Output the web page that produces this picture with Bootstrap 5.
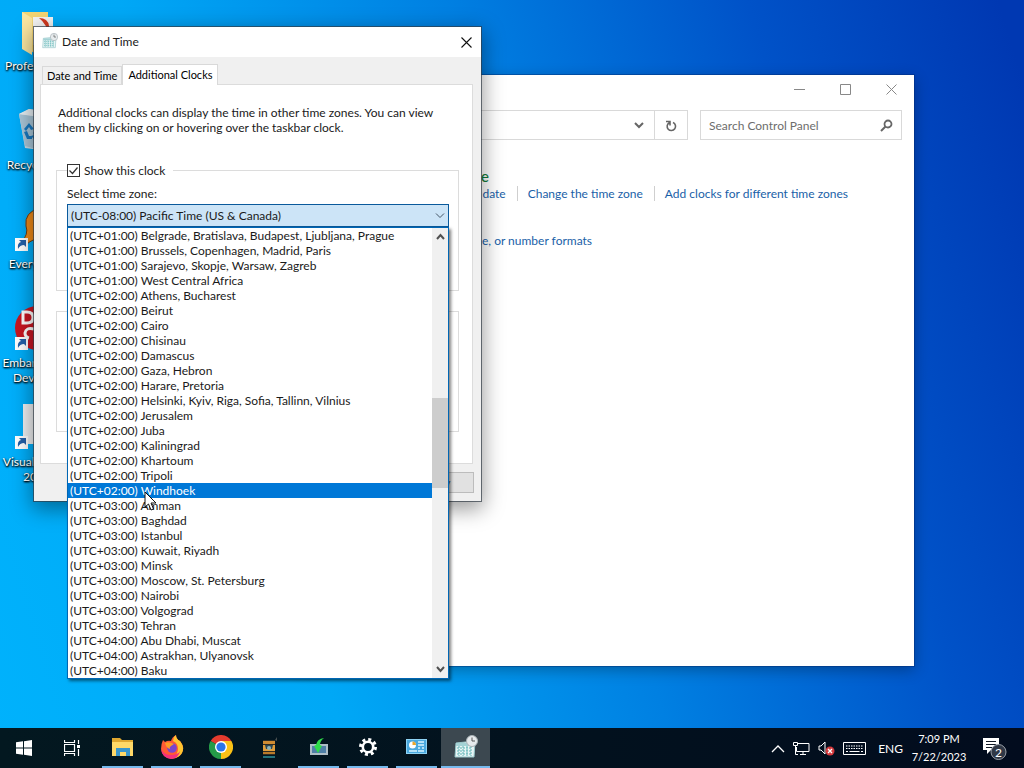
<!DOCTYPE html>
<html lang="en">

<head>
    <meta charset="UTF-8">
    <meta name="viewport" content="width=device-width, initial-scale=1.0">
    <title>Date and Time</title>
    <link href="https://cdn.jsdelivr.net/npm/bootstrap@5.3.0/dist/css/bootstrap.min.css" rel="stylesheet">
    <style>
        body {
            font-family: Lato, "Open Sans", sans-serif;
            font-size: 12px;
            line-height: 15px;
            color: #1a1a1a;
        }

        .desktop {
            min-height: 100vh;
            background: linear-gradient(73deg, #00b2fc 0%, #00a8f6 28%, #0080e2 54%, #0052c8 78%, #0038b2 98%);
        }

        .workspace {
            flex: 1 1 auto;
        }

        /* desktop shortcuts */
        .shortcuts {
            width: 74px;
            padding-top: 8px;
        }

        .shortcut {
            height: 99px;
            color: #fff;
            text-shadow: 0 1px 2px #000, 1px 1px 2px #000;
        }

        .shortcut svg {
            width: 48px;
            height: 48px;
            margin-bottom: 2px;
        }

        .win {
            position: absolute;
            background: #fff;
        }

        /* control panel window */
        .panel-win {
            left: 300px;
            top: 75px;
            width: 614px;
            height: 591px;
            box-shadow: 0 0 0 1px rgba(0, 40, 110, .4), 0 4px 14px rgba(0, 0, 0, .3);
        }

        .panel-win .titlebar {
            height: 27px;
        }

        .caption-btn {
            width: 46px;
            height: 27px;
            padding: 0;
            border: 0;
            background: none;
        }

        .address,
        .search-box {
            height: 30px;
            border: 1px solid #d9d9d9;
        }

        .search-box {
            width: 202px;
        }

        .search-box input {
            border: 0;
            outline: 0;
            min-width: 0;
            font-size: 12px;
            padding: 0 0 0 8px;
        }

        .search-box input::placeholder {
            color: #6d6d6d;
            opacity: 1;
        }

        .refresh {
            width: 33px;
            border: 0;
            border-left: 1px solid #d9d9d9;
            background: none;
            padding: 0;
        }

        .panel-body {
            padding: 26px 66px 0 0;
        }

        .panel-body a {
            color: #1a5fa8;
            text-decoration: none;
        }

        .panel-body h2 {
            font-size: 15px;
            line-height: 20px;
            margin: 0;
        }

        .panel-body h2 a {
            color: #107c3a;
        }

        .divided {
            border-left: 1px solid #cfcfcf;
            padding-left: 10px;
            margin-left: 11px;
        }

        /* dialog */
        .dialog-win {
            left: 34px;
            top: 27px;
            width: 447px;
            height: 474px;
            background: #f0f0f0;
            box-shadow: 0 0 0 1px rgba(50, 60, 70, .7), 0 6px 20px 2px rgba(0, 0, 0, .4);
        }

        .dialog-win .titlebar {
            height: 30px;
            background: #fff;
            padding: 0 0 2px 8px;
        }

        .dialog-win .caption-btn {
            width: 30px;
        }

        .tabs {
            padding: 7px 7px 0 8px;
            font-size: 11px;
        }

        .tab-btn {
            border: 1px solid #d9d9d9;
            border-bottom: 0;
            background: #f0f0f0;
            padding: 0 4px;
            height: 18px;
        }

        .tab-btn.chosen {
            background: #fff;
            height: 21px;
            padding: 0 5px 2px;
            margin-bottom: -1px;
            z-index: 1;
        }

        .tab-page {
            margin: 0 8px 0 6px;
            height: 380px;
            background: #fff;
            border: 1px solid #dcdcdc;
            padding: 20px 13px 0 15px;
        }

        .tab-page p {
            margin: 0 0 35px 2px;
        }

        .clock-group {
            border: 1px solid #dcdcdc;
            height: 121px;
            margin-bottom: 20px;
            padding: 0 9px 0 10px;
        }

        .clock-group label {
            width: fit-content;
        }

        .tick-line {
            margin-top: -8px;
            background: #fff;
            padding-right: 8px;
            width: fit-content;
        }

        .tick {
            appearance: none;
            width: 13px;
            height: 13px;
            margin: 0;
            border: 1px solid #333;
            background: #fff url("data:image/svg+xml,%3Csvg xmlns='http://www.w3.org/2000/svg' viewBox='0 0 11 11'%3E%3Cpath d='M1.5 5.5l3 3 5-6' fill='none' stroke='%23333' stroke-width='1.2'/%3E%3C/svg%3E");
        }

        .zone-select {
            position: relative;
            margin-top: 3px;
        }

        .zone-select select {
            appearance: none;
            width: 100%;
            height: 23px;
            border: 1px solid #0a5a9c;
            background: #cce4f7;
            padding: 0 3px;
            border-radius: 0;
            color: #1a1a1a;
            display: block;
        }

        .zone-select > svg {
            position: absolute;
            right: 4px;
            top: 8px;
        }

        .zone-popup {
            position: absolute;
            left: 0;
            right: 0;
            top: 23px;
            z-index: 5;
            background: #fff;
            border: 1px solid #0066b4;
            box-shadow: 2px 2px 3px rgba(0, 0, 0, .5);
        }

        .zone-popup li {
            height: 15px;
            padding-left: 2px;
            white-space: nowrap;
        }

        .zone-popup li[aria-selected="true"] {
            background: #0078d7;
            color: #fff;
        }

        .scroller {
            width: 16px;
            background: #f0f0f0;
        }

        .scroller .thumb {
            height: 90px;
            background: #cdcdcd;
        }

        .above {
            flex: 153 0 0;
        }

        .below {
            flex: 174 0 0;
        }

        .dialog-foot {
            padding: 8px 7px;
        }

        .dialog-foot button {
            width: 75px;
            height: 21px;
            padding: 0;
            border: 1px solid #bcbcbc;
            background: #e1e1e1;
            color: #555;
            font-size: 11px;
        }

        .pointer {
            position: absolute;
            left: 144px;
            top: 491px;
            z-index: 9;
        }

        /* taskbar */
        .taskbar {
            height: 40px;
            background: linear-gradient(90deg, #031820, #02121e 50%, #020c1e);
            color: #fff;
            position: relative;
            z-index: 10;
        }

        .task {
            width: 49px;
            height: 40px;
            padding: 0 4px;
            border: 0;
            background: none;
        }

        .system .task {
            width: 48px;
        }

        .system {
            margin-right: 2px;
        }

        .task span {
            width: 100%;
            height: 40px;
            border-bottom: 2px solid transparent;
        }

        .task.running span {
            border-color: #76b9ed;
        }

        .task.current {
            padding: 0;
            background: #3c4850;
        }

        .tray button {
            border: 0;
            background: none;
            padding: 0;
            color: #fff;
        }

        .clock {
            font-size: 11px;
            line-height: 18px;
            width: 56px;
        }
    </style>
</head>

<body>
    <div class="desktop d-flex flex-column position-relative overflow-hidden">
        <main class="workspace">
            <div class="shortcuts d-flex flex-column">
                <div class="shortcut d-flex flex-column align-items-center text-center">
                    <svg viewBox="0 0 48 48">
                        <path d="M9 4h26v38l-9 5-17-8z" fill="#f3d574" />
                        <path d="M9 4l10 6v37l-10-6z" fill="#fbe6a0" />
                        <path d="M20 9h20v28H20z" fill="#f4f4f4" />
                        <path d="M26 10q9 0 10 8v10q-2-12-10-18" fill="#d43a20" />
                    </svg>
                    Professional
                </div>
                <div class="shortcut d-flex flex-column align-items-center text-center">
                    <svg viewBox="0 0 48 48">
                        <path d="M6 7l10-5 24 4-5 38-23-3z" fill="#cbdde8" />
                        <path d="M6 7l28 4-3 33-19-5z" fill="#a9c6d8" />
                        <path d="M6 7l10-5 24 4-6 5z" fill="#e6eff4" />
                        <path d="M11 22l5-6 5 6-3 1-2-3-3 4zM11 25l3 7h5v-3h-3l-2-5zM21 32l4-6-3-3-2 3 1 2-3 1z" fill="#1879c0" />
                    </svg>
                    Recycle Bin
                </div>
                <div class="shortcut d-flex flex-column align-items-center text-center">
                    <svg viewBox="0 0 48 48">
                        <path d="M27 2q-16 4-14 18 3 8-5 17l4 3q8-9 17-6 14 0 15-15Q43 2 27 2" fill="#f08a18" stroke="#6b3c10" />
                        <rect x="2" y="32" width="13" height="13" fill="#fff" />
                        <path d="M5 43q-1-6 3-7l-2-2h7v7l-2-2q-4 0-6 4" fill="#2360a8" />
                    </svg>
                    Everything
                </div>
                <div class="shortcut d-flex flex-column align-items-center text-center">
                    <svg viewBox="0 0 48 48">
                        <circle cx="24" cy="23" r="22" fill="#c91622" />
                        <path d="M10 7h4q6 0 6 5.500t-6 5.500h-4zM21 24q-8-2-9 4 0 4 4 5" fill="none" stroke="#fff" stroke-width="3" />
                        <rect x="2" y="32" width="13" height="13" fill="#fff" />
                        <path d="M5 43q-1-6 3-7l-2-2h7v7l-2-2q-4 0-6 4" fill="#2360a8" />
                    </svg>
                    Embarcadero<br>Dev-C++
                </div>
                <div class="shortcut d-flex flex-column align-items-center text-center">
                    <svg viewBox="0 0 48 48">
                        <path d="M10 0h30v40H10z" fill="#eef0f2" />
                        <rect x="2" y="32" width="13" height="13" fill="#fff" />
                        <path d="M5 43q-1-6 3-7l-2-2h7v7l-2-2q-4 0-6 4" fill="#2360a8" />
                    </svg>
                    Visual Studio<br>2022
                </div>
            </div>

            <section class="win panel-win">
                <div class="titlebar d-flex justify-content-end">
                    <button class="caption-btn" aria-label="Minimize"><svg width="11" height="11"><path d="M0 5.500h11" stroke="#888" /></svg></button>
                    <button class="caption-btn" aria-label="Maximize"><svg width="11" height="11"><path d="M.5.500h10v10H.5z" fill="none" stroke="#888" /></svg></button>
                    <button class="caption-btn" aria-label="Close"><svg width="11" height="11"><path d="M.5.500l10 10M10.500.500l-10 10" stroke="#888" /></svg></button>
                </div>
                <div class="d-flex mt-1 pt-1 px-2 gap-2">
                    <div class="address d-flex flex-fill justify-content-end align-items-center">
                        <svg class="me-2" width="16" height="12"><path d="M5 4l4 4 4-4" fill="none" stroke="#666" stroke-width="2" /></svg>
                        <button class="refresh h-100" aria-label="Refresh">
                            <svg width="12" height="12"><path d="M8 2.500A4.200 4.200 0 1 1 4.300 2.700M1 1.500h4v4" fill="none" stroke="#666" stroke-width="1.600" /></svg>
                        </button>
                    </div>
                    <div class="search-box d-flex align-items-center ms-1 me-1 pe-2">
                        <input class="flex-fill" type="text" aria-label="Search Control Panel" placeholder="Search Control Panel">
                        <svg width="13" height="13"><circle cx="8" cy="5" r="3.500" fill="none" stroke="#666" stroke-width="1.800" /><path d="M5.500 7.500L1 12" stroke="#666" stroke-width="2" /></svg>
                    </div>
                </div>
                <div class="panel-body d-flex flex-column align-items-end">
                    <div>
                        <h2><a href="#">Date and Time</a></h2>
                        <div class="d-flex">
                            <a href="#">Set the time and date</a>
                            <a class="divided" href="#">Change the time zone</a>
                            <a class="divided" href="#">Add clocks for different time zones</a>
                        </div>
                        <h2 class="mt-2 pt-1"><a href="#">Region</a></h2>
                        <a href="#">Change date, time, or number formats</a>
                    </div>
                </div>
            </section>

            <section class="win dialog-win">
                <div class="titlebar d-flex align-items-center">
                    <svg width="16" height="16" viewBox="0 0 24 24"><use href="#calendar" /></svg>
                    <span class="flex-fill ps-1">Date and Time</span>
                    <button class="caption-btn" aria-label="Close dialog"><svg width="11" height="11"><path d="M.5.500l10 10M10.500.500l-10 10" stroke="#111" stroke-width="1.100" /></svg></button>
                </div>
                <div class="tabs d-flex align-items-end">
                    <button class="tab-btn">Date and Time</button>
                    <button class="tab-btn chosen">Additional Clocks</button>
                </div>
                <div class="tab-page">
                    <p>Additional clocks can display the time in other time zones. You can view<br>them by clicking on or hovering over the taskbar clock.</p>
                    <div class="clock-group">
                        <div class="tick-line d-flex align-items-center">
                            <input class="tick" type="checkbox" id="show1" checked>
                            <label class="ps-1" for="show1">Show this clock</label>
                        </div>
                        <label class="d-block mt-2" for="zone1">Select time zone:</label>
                        <div class="zone-select">
                            <select id="zone1">
                                <option>(UTC-08:00) Pacific Time (US &amp; Canada)</option>
                            </select>
                            <svg width="10" height="8"><path d="M1 1.500l4 4 4-4" fill="none" stroke="#456" /></svg>
                            <div class="zone-popup d-flex">
                                <ul class="list-unstyled mb-0 flex-fill" id="zones" role="listbox" aria-label="Time zones"></ul>
                                <div class="scroller d-flex flex-column align-items-center">
                                    <svg width="15" height="17"><path d="M4 11l3.500-4L11 11" fill="none" stroke="#505050" stroke-width="2" /></svg>
                                    <div class="above"></div>
                                    <div class="thumb w-100"></div>
                                    <div class="below"></div>
                                    <svg width="15" height="17"><path d="M4 6l3.500 4L11 6" fill="none" stroke="#505050" stroke-width="2" /></svg>
                                </div>
                            </div>
                        </div>
                    </div>
                    <div class="clock-group"></div>
                </div>
                <div class="dialog-foot d-flex justify-content-end">
                    <button>Apply</button>
                </div>
            </section>

            <svg class="pointer" width="13" height="20"><path d="M1 1v15l3.500-3 2.500 6 2.500-1-2.500-6H12z" fill="#fff" stroke="#111" /></svg>
        </main>

        <footer class="taskbar d-flex align-items-center">
            <div class="system d-flex">
                <button class="task" aria-label="Start"><svg width="16" height="16"><path d="M0 2.300l7-1v6.200H0zM8 1.200L16 0v7.500H8zM0 8.500h7v6.200l-7-1zM8 8.500h8V16l-8-1.200z" fill="#fff" /></svg></button>
                <button class="task" aria-label="Task View"><svg width="16" height="16" fill="none" stroke="#fff"><path d="M.5 0v2.500h10V0M.5 4.500h10v7H.5zM.5 16v-2.500h10V16M14.500 0v4M14.500 9v7" stroke-width="1.200" /><path d="M13 5h3v3h-3z" fill="#fff" stroke="none" /></svg></button>
            </div>
            <button class="task running" aria-label="File Explorer"><span class="d-flex align-items-center justify-content-center">
                <svg width="22" height="20"><path d="M0 1h8l2 2h11v16H0z" fill="#e0a830" /><path d="M0 5h21v14H0z" fill="#ffd968" /><path d="M4 19v-8h14v8h-4v-4H8v4z" fill="#3996cc" /></svg></span></button>
            <button class="task running" aria-label="Firefox"><span class="d-flex align-items-center justify-content-center">
                <svg width="24" height="24"><path d="M3 5l2 2q3-2 6-1 1-4 5-6 0 4 4 6 4 5 3 9-2 8-11 9Q2 23 1 14q0-5 2-9" fill="#ff5a35" /><path d="M14 2l2-2q0 4 4 6 5 6 2 12-3 5-9 5 5-4 5-9 0-6-5-8z" fill="#ffc530" /><path d="M1 14q3 6 10 6 7 0 9-4-1 7-9 8-9-1-10-10" fill="#f4307c" /><circle cx="12" cy="13" r="4.800" fill="#7a45cd" /><path d="M5 8q4-2 9 1l-3 2q-2 1-1 3-4-1-5-6" fill="#ff9a25" /></svg></span></button>
            <button class="task running" aria-label="Chrome"><span class="d-flex align-items-center justify-content-center">
                <svg width="24" height="24"><path d="M12 12L1.600 6a12 12 0 0 1 20.800 0z" fill="#e33b2e" /><path d="M12 12l10.400-6A12 12 0 0 1 12 24z" fill="#fbc116" /><path d="M12 12v12A12 12 0 0 1 1.600 6z" fill="#259b48" /><path d="M12 6h10.400L17 15 12 24z" fill="#fbc116" /><circle cx="12" cy="12" r="6" fill="#fff" /><circle cx="12" cy="12" r="4.600" fill="#2a75e8" /></svg></span></button>
            <button class="task" aria-label="Archive tool"><svg width="18" height="22"><path d="M2 3h12v15H2z" fill="#302c22" /><path d="M2 4h12v3H2z" fill="#cf8b32" /><path d="M2 8h12v6H2z" fill="#df9d3b" /><path d="M4 8h8l-1 4H5z" fill="#2b4754" /><circle cx="8" cy="11" r="2" fill="#8fb3b8" /><path d="M2 15h12v2H2z" fill="#b97a2a" /><path d="M2 19h12v2H2z" fill="#23727c" /><path d="M14 3l2-3v4z" fill="#4a5050" /></svg></button>
            <button class="task running" aria-label="Installer"><span class="d-flex align-items-center justify-content-center">
                <svg width="20" height="20"><path d="M1 7h18v11H1z" fill="#aebdc6" /><path d="M3 9h14v7H3z" fill="#4f7fa6" /><path d="M15 1Q8 2 7 8l-2 1 4 7 4-7-2-1q0-4 4-7" fill="#2edb49" /></svg></span></button>
            <button class="task running" aria-label="Settings"><span class="d-flex align-items-center justify-content-center">
                <svg width="18" height="18" fill="none" stroke="#fff"><circle cx="9" cy="9" r="5.200" stroke-width="2.600" /><circle cx="9" cy="9" r="7.500" stroke-width="3" stroke-dasharray="3 2.890" /></svg></span></button>
            <button class="task running" aria-label="Control Panel"><span class="d-flex align-items-center justify-content-center">
                <svg width="22" height="16"><path d="M0 0h21v15H0z" fill="#8fd3f4" /><path d="M1 1h19v13H1z" fill="#4aa8de" /><circle cx="6.500" cy="6" r="3.500" fill="#fff" /><path d="M6.500 6V2.500A3.500 3.500 0 0 1 10 6z" fill="#e9a52c" /><path d="M12 3h6M12 6h6M12 9h2m2 0h2M3 12h8M12 12h6" stroke="#d9f3ff" stroke-width="1.500" /></svg></span></button>
            <button class="task running current" aria-label="Date and Time"><span class="d-flex align-items-center justify-content-center">
                <svg width="24" height="24" viewBox="0 0 24 24">
                    <g id="calendar">
                        <path d="M2 8l19-2-1 16H1z" fill="#e8f5f5" stroke="#98c7ca" />
                        <path d="M2 8h18v3H2z" fill="#a4d2d5" />
                        <path d="M3 13h15M3 16h15M3 19h15M5 11v10M9 11v10M13 11v10M17 11v10" stroke="#5fb3b5" stroke-dasharray="2 1" />
                        <circle cx="18" cy="6" r="5.500" fill="#e6eaec" stroke="#a9b2b6" />
                        <path d="M18 2.500V6h3" fill="none" stroke="#555" />
                    </g>
                </svg></span></button>
            <div class="tray d-flex align-items-center ms-auto h-100">
                <button aria-label="Show hidden icons"><svg width="14" height="10"><path d="M1 8l6-6 6 6" fill="none" stroke="#fff" stroke-width="1.300" /></svg></button>
                <button class="ms-2" aria-label="Network"><svg width="17" height="15" fill="none" stroke="#fff"><path d="M4 2.500h12v8H3.500V6M7 13.500h6M10 11v2M.5 1.500h4v3h-4zM2.500 5v8.500H5" /></svg></button>
                <button class="ms-2" aria-label="Volume"><svg width="17" height="16"><path d="M1 6h2l4-4v12l-4-4H1z" fill="none" stroke="#fff" /><circle cx="12" cy="11" r="4.500" fill="#d3393d" /><path d="M10 9l4 4M14 9l-4 4" stroke="#fff" stroke-width="1.300" /></svg></button>
                <button class="ms-2" aria-label="Keyboard"><svg width="23" height="14" fill="none" stroke="#fff"><path d="M.5.500h22v12H.5z" /><path d="M3 4h17M3 6.500h17" stroke-dasharray="1.500 1" /><path d="M3 9.500h2M6.500 9.500h10M18 9.500h2" /></svg></button>
                <span class="ms-2 me-2 ps-1">ENG</span>
                <div class="clock text-center">7:09 PM<br>7/22/2023</div>
                <button class="ms-3 me-3" aria-label="Notifications"><svg width="25" height="26"><path d="M0 3h16v12H8l-4 4v-4H0z" fill="#fff" /><path d="M3 6.500h10M3 9.500h10M3 12.500h6" stroke="#111a26" /><circle cx="15.500" cy="17" r="7.500" fill="#303846" stroke="#9aa0a8" /><text x="15.500" y="21.500" fill="#fff" font-size="12" text-anchor="middle">2</text></svg></button>
            </div>
        </footer>
    </div>

    <script src="https://cdn.jsdelivr.net/npm/bootstrap@5.3.0/dist/js/bootstrap.bundle.min.js"></script>
    <script>
        const zones = [
            ["+01:00", "Belgrade, Bratislava, Budapest, Ljubljana, Prague"],
            ["+01:00", "Brussels, Copenhagen, Madrid, Paris"],
            ["+01:00", "Sarajevo, Skopje, Warsaw, Zagreb"],
            ["+01:00", "West Central Africa"],
            ["+02:00", "Athens, Bucharest"],
            ["+02:00", "Beirut"],
            ["+02:00", "Cairo"],
            ["+02:00", "Chisinau"],
            ["+02:00", "Damascus"],
            ["+02:00", "Gaza, Hebron"],
            ["+02:00", "Harare, Pretoria"],
            ["+02:00", "Helsinki, Kyiv, Riga, Sofia, Tallinn, Vilnius"],
            ["+02:00", "Jerusalem"],
            ["+02:00", "Juba"],
            ["+02:00", "Kaliningrad"],
            ["+02:00", "Khartoum"],
            ["+02:00", "Tripoli"],
            ["+02:00", "Windhoek"],
            ["+03:00", "Amman"],
            ["+03:00", "Baghdad"],
            ["+03:00", "Istanbul"],
            ["+03:00", "Kuwait, Riyadh"],
            ["+03:00", "Minsk"],
            ["+03:00", "Moscow, St. Petersburg"],
            ["+03:00", "Nairobi"],
            ["+03:00", "Volgograd"],
            ["+03:30", "Tehran"],
            ["+04:00", "Abu Dhabi, Muscat"],
            ["+04:00", "Astrakhan, Ulyanovsk"],
            ["+04:00", "Baku"]
        ];
        const list = document.getElementById("zones");

        zones.forEach(([offset, cities]) => {
            const li = document.createElement("li");
            li.setAttribute("role", "option");
            li.setAttribute("aria-selected", cities === "Windhoek");
            li.textContent = `(UTC${offset}) ${cities}`;
            list.appendChild(li);
        });
    </script>
</body>

</html>
